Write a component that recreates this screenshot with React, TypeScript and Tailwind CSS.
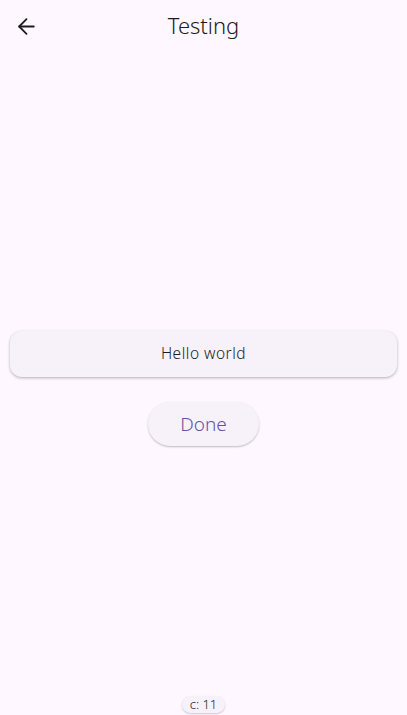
import { ArrowLeft } from "lucide-react";

const App = () => {
  return (
    <div
      className="w-[407px] h-[715px] bg-[#fef7ff] flex flex-col text-[#1d1b20]"
      style={{ fontFamily: "'Noto Sans', sans-serif" }}
    >
      {/* App bar */}
      <div className="h-[52px] flex items-center px-[14px] relative">
        <ArrowLeft size={25} strokeWidth={1.7} className="text-[#1d1b20]" />
        <div className="absolute inset-0 flex items-center justify-center text-[22px] font-[350] pb-[1px]">
          Testing
        </div>
      </div>

      {/* Content */}
      <div className="flex-1 flex flex-col items-center">
        <div className="h-[279px]" />
        <div className="w-[387px] h-[46px] rounded-xl bg-[#f7f2fa] shadow-[0_1px_3px_rgba(0,0,0,0.3)] flex items-center justify-center text-[15.5px] font-[350] tracking-[0.5px] text-[#1d1b20]">
          Hello world
        </div>
        <button className="mt-[25px] w-[111px] h-[44px] rounded-full bg-[#f7f2fa] shadow-[0_1px_2px_rgba(0,0,0,0.25)] text-[19px] font-[350] text-[#6750a4]">
          Done
        </button>
        <div className="flex-1" />
        <div className="mb-[2px] px-2 h-[17px] rounded-full bg-[#f7f2fa] shadow-[0_1px_2px_rgba(0,0,0,0.2)] flex items-center text-[13px] font-[350]">
          c: 11
        </div>
      </div>
    </div>
  );
};

export default App;
